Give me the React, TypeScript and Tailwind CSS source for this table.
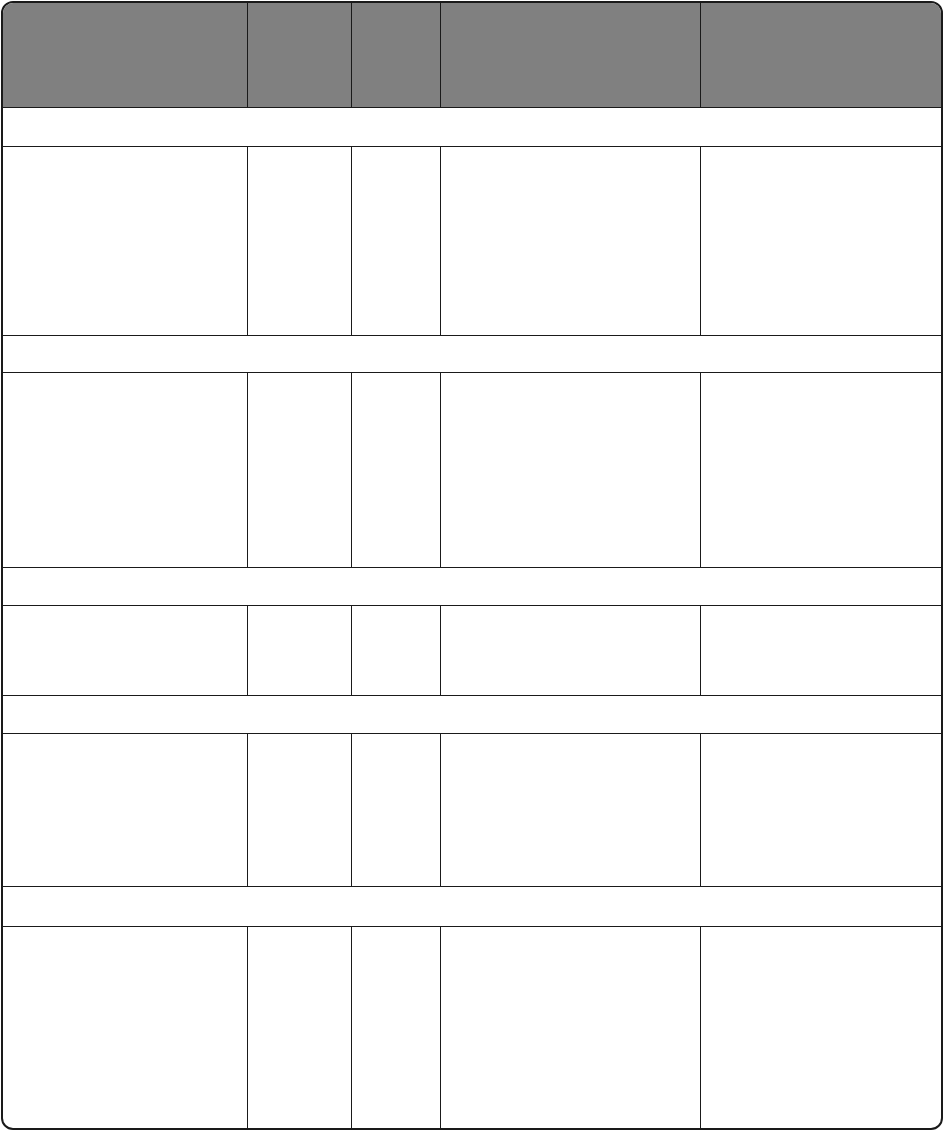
import React from "react";

const L = "border-[#1a1a1a]";

function DataRow({ h }: { h: string }) {
  return (
    <div className={`flex ${h} border-b ${L}`}>
      <div className={`w-[245px] shrink-0 border-r ${L}`} />
      <div className={`w-[104px] shrink-0 border-r ${L}`} />
      <div className={`w-[89px] shrink-0 border-r ${L}`} />
      <div className={`w-[260px] shrink-0 border-r ${L}`} />
      <div className="flex-1" />
    </div>
  );
}

function SectionRow({ h }: { h: string }) {
  return <div className={`${h} border-b ${L} bg-white`} />;
}

export default function App() {
  return (
    <div className="w-[944px] h-[1131px] bg-white pt-px pl-px" style={{ fontFamily: "'Liberation Sans', sans-serif" }}>
      <div className={`w-[942px] h-[1129px] border-2 ${L} rounded-[12px] overflow-hidden flex flex-col bg-white`}>
        <div className={`flex h-[105px] shrink-0 border-b ${L} bg-[#808080]`}>
          <div className={`w-[245px] shrink-0 border-r ${L}`} />
          <div className={`w-[104px] shrink-0 border-r ${L}`} />
          <div className={`w-[89px] shrink-0 border-r ${L}`} />
          <div className={`w-[260px] shrink-0 border-r ${L}`} />
          <div className="flex-1" />
        </div>
        <SectionRow h="h-[39px] shrink-0" />
        <DataRow h="h-[189px] shrink-0" />
        <SectionRow h="h-[37px] shrink-0" />
        <DataRow h="h-[195px] shrink-0" />
        <SectionRow h="h-[38px] shrink-0" />
        <DataRow h="h-[90px] shrink-0" />
        <SectionRow h="h-[38px] shrink-0" />
        <DataRow h="h-[153px] shrink-0" />
        <SectionRow h="h-[40px] shrink-0" />
        <div className="flex flex-1">
          <div className={`w-[245px] shrink-0 border-r ${L}`} />
          <div className={`w-[104px] shrink-0 border-r ${L}`} />
          <div className={`w-[89px] shrink-0 border-r ${L}`} />
          <div className={`w-[260px] shrink-0 border-r ${L}`} />
          <div className="flex-1" />
        </div>
      </div>
    </div>
  );
}
